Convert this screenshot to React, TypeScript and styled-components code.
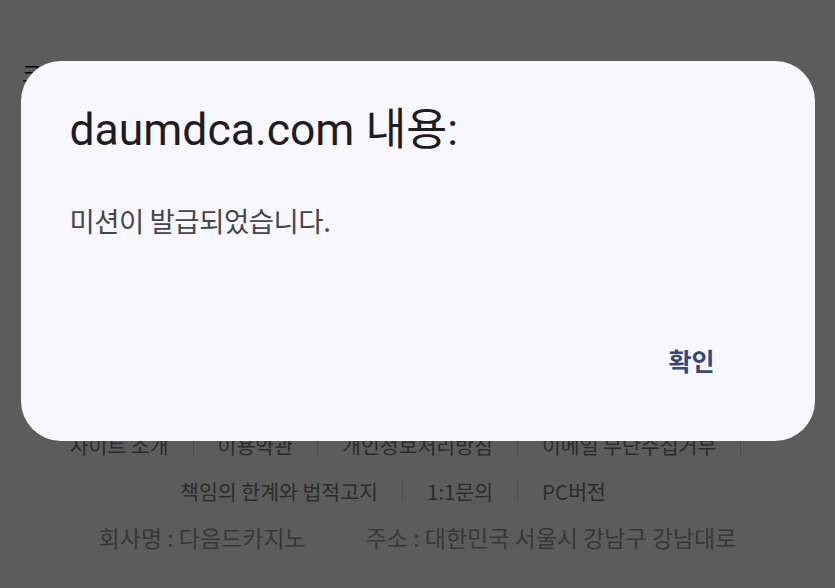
import styled, { createGlobalStyle } from "styled-components";

const GlobalStyle = createGlobalStyle`
  html, body {
    margin: 0;
    padding: 0;
    background: #ffffff;
  }
  body {
    font-family: "Noto Sans CJK KR", "Noto Sans", sans-serif;
  }
`;

const Page = styled.div`
  display: flex;
  flex-direction: column;
  justify-content: space-between;
  height: 588px;
  background: #ffffff;
  overflow: hidden;
`;

const Heading = styled.div`
  padding: 56px 0 0 22px;
  font-size: 22px;
  line-height: 32px;
  color: #111;
  white-space: nowrap;
`;

const Footer = styled.div`
  display: flex;
  flex-direction: column;
  align-items: center;
  padding-bottom: 28px;
`;

const Row = styled.div<{ $gap?: number }>`
  display: flex;
  justify-content: center;
  align-items: center;
  gap: ${({ $gap }) => $gap ?? 0}px;
  height: 46px;
  font-size: ${({ $gap }) => ($gap ? 23 : 20.5)}px;
  color: ${({ $gap }) => ($gap ? "#9a9a9a" : "#777777")};
  white-space: nowrap;
`;

const LinkItem = styled.span<{ $noBar?: boolean }>`
  display: flex;
  align-items: center;

  &::after {
    content: "";
    display: block;
    width: 1px;
    height: 22px;
    margin: 0 24px;
    background: ${({ $noBar }) => ($noBar ? "transparent" : "#d4d4d4")};
  }
`;

const Overlay = styled.div`
  position: fixed;
  inset: 0;
  display: flex;
  justify-content: center;
  align-items: flex-start;
  padding-top: 61px;
  background: rgba(0, 0, 0, 0.64);
`;

const Dialog = styled.div`
  display: flex;
  flex-direction: column;
  box-sizing: border-box;
  width: 794px;
  height: 380px;
  padding: 43px 49px 0;
  border-radius: 40px;
  background: #f8f7fd;
`;

const Title = styled.div`
  font-family: Roboto, "Noto Sans CJK KR", sans-serif;
  font-size: 44.5px;
  line-height: 52px;
  color: #1d1d1f;
  white-space: nowrap;
`;

const Message = styled.div`
  margin-top: 46px;
  font-family: "Noto Sans CJK KR", sans-serif;
  font-size: 27.5px;
  line-height: 36px;
  color: #45464b;
  letter-spacing: -0.5px;
`;

const Actions = styled.div`
  display: flex;
  justify-content: flex-end;
  margin-top: 104px;
  padding-right: 51px;
`;

const OkButton = styled.button`
  border: none;
  background: transparent;
  padding: 0;
  font-family: "Noto Sans CJK KR", sans-serif;
  font-size: 25px;
  font-weight: 700;
  line-height: 36px;
  color: #33497a;
  cursor: pointer;
`;

const topLinks = ["사이트 소개", "이용약관", "개인정보처리방침", "이메일 무단수집거부"];
const subLinks = ["책임의 한계와 법적고지", "1:1문의", "PC버전"];

export default function App() {
  return (
    <>
      <GlobalStyle />
      <Page>
        <Heading>크리에이터 미션 안내</Heading>
        <Footer>
          <Row>
            {topLinks.map((t) => (
              <LinkItem key={t}>{t}</LinkItem>
            ))}
          </Row>
          <Row>
            {subLinks.map((t, i) => (
              <LinkItem key={t} $noBar={i === subLinks.length - 1}>
                {t}
              </LinkItem>
            ))}
          </Row>
          <Row $gap={60}>
            <span>회사명 : 다음드카지노</span>
            <span>주소 : 대한민국 서울시 강남구 강남대로</span>
          </Row>
        </Footer>
      </Page>
      <Overlay>
        <Dialog>
          <Title>daumdca.com 내용:</Title>
          <Message>미션이 발급되었습니다.</Message>
          <Actions>
            <OkButton>확인</OkButton>
          </Actions>
        </Dialog>
      </Overlay>
    </>
  );
}
